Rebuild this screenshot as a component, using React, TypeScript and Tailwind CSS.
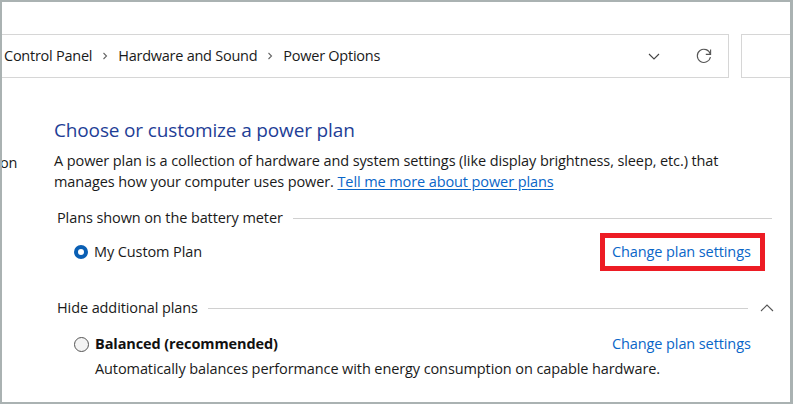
import React from 'react';

const font = { fontFamily: '"Open Sans", "Noto Sans", sans-serif' };

const Chevron: React.FC = () => (
    <svg width="8" height="10" viewBox="0 0 8 10" className="mx-[9px] text-[#666]">
        <path d="M2.5 2 L5.5 5 L2.5 8" fill="none" stroke="currentColor" strokeWidth="1.1" />
    </svg>
);

const SectionTitle: React.FC<{ label: string; caret?: boolean }> = ({ label, caret }) => (
    <div className="flex items-center pl-[3px] h-[20px]">
        <span className="text-[14.5px] text-[#1a1a1a] whitespace-nowrap">{label}</span>
        <div className="flex-1 h-px bg-[#d0d0d0] ml-[10px]" />
        {caret && (
            <svg width="14" height="8" viewBox="0 0 14 8" className="ml-[12px] mr-[-2px] text-[#555]">
                <path d="M1 7 L7 1 L13 7" fill="none" stroke="currentColor" strokeWidth="1.1" />
            </svg>
        )}
    </div>
);

export default function App() {
    return (
        <div
            className="w-[793px] h-[404px] bg-white border-2 border-[#aab2b2] border-r-[3px] overflow-hidden tracking-[-0.1px]"
            style={font}
        >
            {/* address bar */}
            <div className="flex mt-[32px] h-[44px]">
                <div className="w-[727px] flex items-center border-y border-r border-[#d6d6d6] pl-[2px] text-[14.5px] tracking-[-0.25px] text-[#1a1a1a]">
                    <span>Control Panel</span>
                    <Chevron />
                    <span>Hardware and Sound</span>
                    <Chevron />
                    <span>Power Options</span>
                    <div className="flex-1" />
                    <svg width="12" height="7" viewBox="0 0 12 7" className="mr-[35px] text-[#444]">
                        <path d="M1 1 L6 6 L11 1" fill="none" stroke="currentColor" strokeWidth="1.1" />
                    </svg>
                    <svg width="18" height="18" viewBox="0 0 18 18" className="mr-[15px] text-[#555]">
                        <path d="M15.3 7.2 A6.6 6.6 0 1 0 15.4 10" fill="none" stroke="currentColor" strokeWidth="1.1" />
                        <path d="M15.6 2.6 L15.6 7.4 L10.8 7.4" fill="none" stroke="currentColor" strokeWidth="1.1" />
                    </svg>
                </div>
                <div className="flex-1 ml-[12px] border-y border-l border-[#d6d6d6]" />
            </div>

            {/* body */}
            <div className="flex">
                <div className="w-[54px] pt-[74px] ml-[-2px] text-[14.5px] text-[#1a1a1a]">on</div>
                <div className="w-[718px] pt-[39px]">
                    <h1 className="text-[19px] leading-[26px] tracking-[-0.15px] text-[#1e3e96]">Choose or customize a power plan</h1>
                    <p className="mt-[7px] text-[14.5px] leading-[21px] text-[#1a1a1a]">
                        A power plan is a collection of hardware and system settings (like display brightness, sleep, etc.) that
                        <br />
                        manages how your computer uses power.{' '}
                        <span className="text-[#0a66c8] underline underline-offset-2">Tell me more about power plans</span>
                    </p>

                    <div className="mt-[16px]">
                        <SectionTitle label="Plans shown on the battery meter" />
                    </div>

                    <div className="flex items-center mt-[5px]">
                        <div className="flex items-center pl-[20px]">
                            <span className="w-[14px] h-[14px] rounded-full border-[4px] border-[#0a5fb4] bg-white" />
                            <span className="ml-[6px] text-[14.5px] text-[#1a1a1a]">My Custom Plan</span>
                        </div>
                        <div className="ml-auto mr-[7px] w-[165px] h-[38px] border-[5px] border-[#ed1c24] flex items-center pl-[7px] text-[14.5px] whitespace-nowrap text-[#0a66c8]">
                            Change plan settings
                        </div>
                    </div>

                    <div className="mt-[27px]">
                        <SectionTitle label="Hide additional plans" caret />
                    </div>

                    <div className="flex items-center h-[20px] mt-[16px] pl-[20px]">
                        <span className="w-[15px] h-[15px] rounded-full border border-[#555] bg-[#f4f4f4]" />
                        <span className="ml-[6px] text-[14.5px] font-bold text-[#111]">Balanced (recommended)</span>
                        <div className="ml-auto mr-[7px] w-[165px] border-x-[5px] border-transparent pl-[7px] text-[14.5px] whitespace-nowrap text-[#0a66c8] leading-[20px]">
                            Change plan settings
                        </div>
                    </div>
                    <div className="pl-[41px] mt-[4px] text-[14.5px] text-[#1a1a1a] whitespace-nowrap">
                        Automatically balances performance with energy consumption on capable hardware.
                    </div>
                </div>
            </div>
        </div>
    );
}
